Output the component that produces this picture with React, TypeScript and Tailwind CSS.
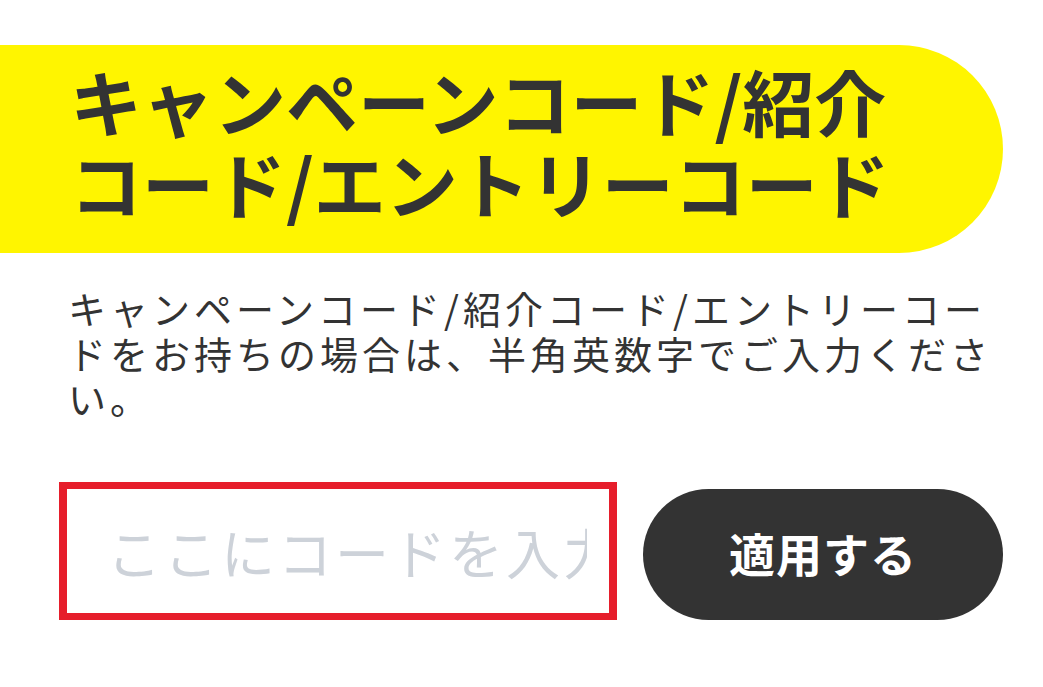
import React, { useState } from "react";

export default function App() {
  const [code, setCode] = useState("");

  return (
    <div className="min-h-screen w-full bg-white font-['Noto_Sans_CJK_JP','Noto_Sans',sans-serif] text-[#333333]">
      <div className="pt-[45px]">
        {/* Heading banner */}
        <div className="flex h-[208px] w-[1003px] items-center rounded-r-full bg-[#fff500] pb-[16px] pl-[70px] pr-[100px]">
          <h2 className="text-[72px] font-bold leading-[82px]">
            キャンペーンコード/紹介コード/エントリーコード
          </h2>
        </div>

        {/* Description */}
        <p className="mt-[32px] w-[1018px] pl-[68px] text-[38px] leading-[45px] tracking-[4px]">
          キャンペーンコード/紹介コード/エントリーコードをお持ちの場合は、半角英数字でご入力ください。
        </p>

        {/* Code input */}
        <div className="mt-[62px] flex items-end gap-[26px] pl-[59px]">
          <input
            type="text"
            value={code}
            onChange={(e) => setCode(e.target.value)}
            placeholder="ここにコードを入力"
            className="h-[138px] w-[558px] border-x-[8px] border-y-[7px] border-[#e61e2b] bg-white pl-[40px] pr-[22px] text-[54px] tracking-[3px] outline-none placeholder:text-[#cdd2d9]"
          />
          <button className="h-[131px] w-[360px] rounded-full bg-[#333333] pb-[4px] text-[46px] font-bold tracking-[1px] text-white">
            適用する
          </button>
        </div>
      </div>
    </div>
  );
}
